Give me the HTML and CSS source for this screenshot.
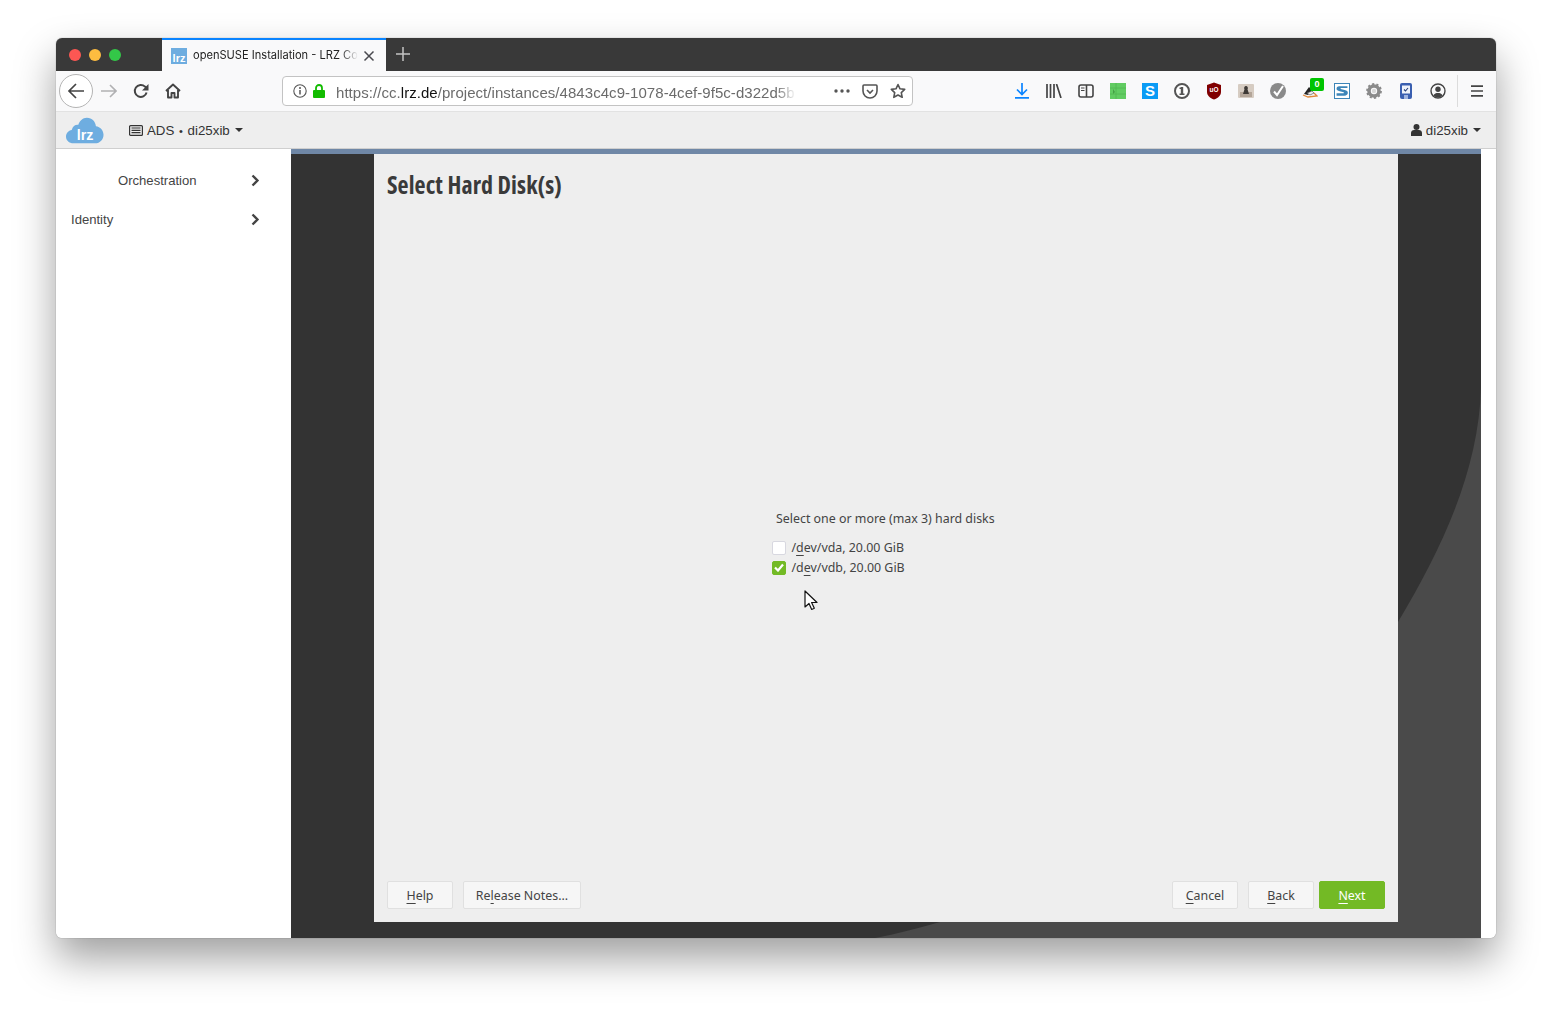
FILE: index.html
```html
<!DOCTYPE html>
<html lang="en">
<head>
<meta charset="utf-8">
<title>openSUSE Installation - LRZ Compute Cloud</title>
<link rel="stylesheet" href="styles.css">
</head>
<body>
<div class="window">
  <div class="tabbar">
    <div class="lights"><span class="light red"></span><span class="light yellow"></span><span class="light green"></span></div>
    <div class="tab">
      <span class="favicon">lrz</span>
      <span class="tab-title">openSUSE Installation - LRZ Co</span>
      <svg class="tab-close" width="12" height="12" viewBox="0 0 12 12"><path d="M1.5 1.5l9 9M10.5 1.5l-9 9" stroke="#4a4a4f" stroke-width="1.5"/></svg>
    </div>
    <svg class="new-tab" width="14" height="14" viewBox="0 0 14 14"><path d="M7 0v14M0 7h14" stroke="#c4c4c4" stroke-width="1.5"/></svg>
  </div>

  <div class="toolbar">
    <span class="back-btn"><svg width="18" height="16" viewBox="0 0 18 16"><path d="M9 1L2 8l7 7M2 8h15" fill="none" stroke="#444" stroke-width="1.7"/></svg></span>
    <span class="tool"><svg width="16" height="14" viewBox="0 0 16 14"><path d="M9 1l6 6-6 6M15 7H0" fill="none" stroke="#b1b1b3" stroke-width="1.6"/></svg></span>
    <span class="tool"><svg width="16" height="16" viewBox="0 0 16 16"><path d="M13.6 9.5A6 6 0 1 1 12 3.6L14 5.4" fill="none" stroke="#444" stroke-width="2"/><path d="M15.500 1v6.500H9z" fill="#444"/></svg></span>
    <span class="tool"><svg width="16" height="16" viewBox="0 0 16 16"><path d="M1 8l7-6.5L15 8M3 7v7.500h3.500V10h3v4.500H13V7" fill="none" stroke="#444" stroke-width="1.900" stroke-linejoin="round"/></svg></span>
    <div class="urlbar">
      <svg class="url-info" width="14" height="14" viewBox="0 0 14 14"><circle cx="7" cy="7" r="6.200" fill="none" stroke="#555" stroke-width="1.100"/><path d="M7 6v4.500" stroke="#555" stroke-width="1.500"/><circle cx="7" cy="4" r="1" fill="#555"/></svg>
      <svg class="url-lock" width="12" height="14" viewBox="0 0 12 14"><rect x="0" y="6" width="12" height="8" rx="1" fill="#12bc00"/><path d="M3 6.500V4a3 3 0 0 1 6 0v2.500" fill="none" stroke="#12bc00" stroke-width="1.800"/></svg>
      <span class="url-text">https://cc.<b>lrz.de</b>/project/instances/4843c4c9-1078-4cef-9f5c-d322d5b</span>
      <svg class="url-more" width="16" height="4" viewBox="0 0 16 4"><circle cx="2" cy="2" r="1.700" fill="#555"/><circle cx="8" cy="2" r="1.700" fill="#555"/><circle cx="14" cy="2" r="1.700" fill="#555"/></svg>
      <svg class="url-pocket" width="16" height="15" viewBox="0 0 16 15"><path d="M2 1h12a1 1 0 0 1 1 1v5a7 7 0 0 1-14 0V2a1 1 0 0 1 1-1z" fill="none" stroke="#555" stroke-width="1.600"/><path d="M5 6l3 3 3-3" fill="none" stroke="#555" stroke-width="1.600"/></svg>
      <svg class="url-star" width="16" height="16" viewBox="0 0 16 16"><path d="M8 1.500l2 4.300 4.700.6-3.400 3.200.9 4.700L8 12l-4.200 2.300.9-4.700L1.300 6.400 6 5.800z" fill="none" stroke="#555" stroke-width="1.600" stroke-linejoin="round"/></svg>
    </div>
    <div class="tool-group">
      <span class="tool"><svg width="14" height="16" viewBox="0 0 14 16"><path d="M7 0v11M2 6.500L7 11.500 12 6.500" fill="none" stroke="#0a84ff" stroke-width="1.700"/><path d="M0 14.800h14" stroke="#0a84ff" stroke-width="1.800"/></svg></span>
      <span class="tool"><svg width="16" height="14" viewBox="0 0 16 14"><path d="M1 0v14M4.500 0v14M8 0v14M10.500 0L15 14" fill="none" stroke="#444" stroke-width="1.700"/></svg></span>
      <span class="tool"><svg width="16" height="14" viewBox="0 0 16 14"><rect x="1" y="1" width="14" height="12" rx="2" fill="none" stroke="#444" stroke-width="1.600"/><path d="M8.500 1v12" stroke="#444" stroke-width="1.600"/><path d="M3 4h3.500M3 6.500h3.500" stroke="#444" stroke-width="1.100"/></svg></span>
      <span class="tool"><svg width="16" height="16" viewBox="0 0 16 16"><rect width="16" height="16" fill="#62cc62"/><path d="M6 0v16M0 5h16M0 11h16" stroke="#52b852" stroke-width=".8"/><path d="M3 6l2 3-2 2z" fill="#45a045"/></svg></span>
      <span class="tool"><span class="ext-s">S</span></span>
      <span class="tool"><svg width="16" height="16" viewBox="0 0 16 16"><circle cx="8" cy="8" r="7" fill="#fff" stroke="#555" stroke-width="2"/><path d="M6.800 4h2.400v8H6.800z" fill="#555"/><path d="M5.500 4.500h3v1.500h-3zM5.500 10.500h5V12h-5z" fill="#555"/></svg></span>
      <span class="tool"><svg width="16" height="18" viewBox="0 0 16 18"><path d="M8 .5L15 3v7c0 3.500-3 6-7 7.500C4 16 1 13.500 1 10V3z" fill="#800000"/><text class="ub" x="8" y="10" text-anchor="middle">uO</text></svg></span>
      <span class="tool"><svg width="16" height="16" viewBox="0 0 16 16"><rect width="16" height="14" y="1" rx="1" fill="#d6ccc2"/><rect x="2" y="9" width="12" height="5" fill="#b3a598"/><path d="M8 3a2 2 0 0 1 1.500 3.200L11 11H5l1.500-4.800A2 2 0 0 1 8 3z" fill="#3e3a36"/></svg></span>
      <span class="tool"><svg width="16" height="16" viewBox="0 0 16 16"><circle cx="8" cy="8" r="8" fill="#8a8a8a"/><path d="M4 8.500l3 3.500 6-9" fill="none" stroke="#fff" stroke-width="2"/></svg></span>
      <span class="tool"><svg width="16" height="14" viewBox="0 0 16 14"><path d="M1 11l5 2 9-1-3-3" fill="none" stroke="#e08a3c" stroke-width="1.300"/><path d="M2 10l5-7 3 3-4 5z" fill="#222"/><path d="M5 9l5-2 2 2-4 2z" fill="#eee" stroke="#444" stroke-width=".6"/></svg><span class="badge">0</span></span>
      <span class="tool"><span class="ext-s2"><svg width="18" height="16" viewBox="0 0 18 16"><path d="M16 2H5.500C3 2 2 3.500 2 5c0 2 1.500 2.500 4 3.200l4 1c1 .3 1.500.5 1.500 1s-.5.800-1.500.800H2v3h10c3 0 4.500-1.500 4.500-3.700 0-2-1.300-2.800-4-3.500l-4-1c-1-.3-1.500-.5-1.500-.9s.4-.7 1.300-.7H16z" fill="#3d85b8"/></svg></span></span>
      <span class="tool"><svg width="16" height="16" viewBox="0 0 16 16"><circle cx="8" cy="8" r="5" fill="none" stroke="#8a8a8a" stroke-width="3.600"/><circle cx="8" cy="8" r="7" fill="none" stroke="#8a8a8a" stroke-width="1.800" stroke-dasharray="2.200 2.200"/><circle cx="8" cy="8" r="2.200" fill="#d8d8d8"/></svg></span>
      <span class="tool"><svg width="12" height="16" viewBox="0 0 12 16"><rect width="12" height="16" rx="2" fill="#3a5fb0"/><rect x="2" y="2.500" width="8" height="8" fill="#eef2fa"/><path d="M4 6.500l1.500 1.500L8 5" fill="none" stroke="#27407a" stroke-width="1.100"/><rect x="4" y="12" width="4" height="4" fill="#9fb4e0"/></svg></span>
      <span class="tool"><svg width="16" height="16" viewBox="0 0 16 16"><circle cx="8" cy="8" r="7" fill="none" stroke="#444" stroke-width="1.400"/><circle cx="8" cy="6.300" r="2.700" fill="#444"/><path d="M3.300 12.500C4.500 10.500 6 10 8 10s3.500.5 4.700 2.500A7 7 0 0 1 8 14.500a7 7 0 0 1-4.700-2z" fill="#444"/></svg></span>
    </div>
    <span class="tool-sep"></span>
    <span class="tool"><svg width="12" height="12" viewBox="0 0 12 12"><path d="M0 1.200h12M0 6h12M0 10.800h12" stroke="#444" stroke-width="1.700"/></svg></span>
  </div>

  <header class="appbar">
    <svg class="logo" width="38" height="27" viewBox="0 0 40 28"><path d="M8 27.500C3 27.500 0 24 0 20.500s2.500-6.500 6-7C7 9.500 10 7.500 13 8c1-4 4.500-7.500 9-7.500 5.500 0 9 4 9.500 9 4.500 .5 8 4.500 8 9 0 5-3.500 9-9 9z" fill="#6eade0"/><text class="logo-text" x="20" y="24.500" text-anchor="middle">lrz</text></svg>
    <span class="project">
      <svg width="14" height="11" viewBox="0 0 14 11"><rect x=".6" y=".6" width="12.800" height="9.800" rx="1" fill="none" stroke="#333" stroke-width="1.200"/><path d="M2.500 3h9M2.500 5.300h9M2.500 7.700h9" stroke="#333" stroke-width="1.200"/></svg>
      <span>ADS <span class="dot">•</span> di25xib</span>
      <span class="caret"></span>
    </span>
    <span class="user">
      <svg width="11" height="12" viewBox="0 0 11 12"><circle cx="5.500" cy="3" r="3" fill="#333"/><path d="M0 12V9c0-2 1.500-3 3-3h5c1.500 0 3 1 3 3v3z" fill="#333"/></svg>
      <span>di25xib</span>
      <span class="caret"></span>
    </span>
  </header>

  <div class="content">
    <nav class="sidebar">
      <a class="side-item side-item-center"><span>Orchestration</span><svg width="9" height="13" viewBox="0 0 9 13"><path d="M1.500 1.500l5 5-5 5" fill="none" stroke="#444" stroke-width="2.300"/></svg></a>
      <a class="side-item"><span>Identity</span><svg width="9" height="13" viewBox="0 0 9 13"><path d="M1.500 1.500l5 5-5 5" fill="none" stroke="#444" stroke-width="2.300"/></svg></a>
    </nav>
    <main class="console">
      <svg class="console-bg" width="1190" height="789" viewBox="0 0 1190 789"><path d="M1190 238C1188 320 1152 398 1107 473L649 773C628 779 605 785 584 789H1190z" fill="#4a4a4a"/></svg>
      <div class="band"></div>
      <section class="dialog">
        <h1 class="dialog-title">Select Hard Disk(s)</h1>
        <div class="dialog-body">
          <div class="disk-group">
            <div class="disk-label">Select one or more (max 3) hard disks</div>
            <label class="disk"><span class="check"></span><span>/<u>d</u>ev/vda, 20.00 GiB</span></label>
            <label class="disk"><span class="check checked"><svg width="10" height="9" viewBox="0 0 10 9"><path d="M1 4.500l3 3 5-6" fill="none" stroke="#fff" stroke-width="2.200"/></svg></span><span>/d<u>e</u>v/vdb, 20.00 GiB</span></label>
          </div>
        </div>
        <div class="dialog-actions">
          <button class="btn"><u>H</u>elp</button>
          <button class="btn btn-wide">Re<u>l</u>ease Notes...</button>
          <span class="spacer"></span>
          <button class="btn"><u>C</u>ancel</button>
          <button class="btn"><u>B</u>ack</button>
          <button class="btn btn-next"><u>N</u>ext</button>
        </div>
        <svg class="cursor" width="14" height="21" viewBox="0 0 14 21"><path d="M1 1v16l4-3.500 2.700 6 2.600-1.200-2.700-5.800H13z" fill="#fff" stroke="#111" stroke-width="1.200" stroke-linejoin="round"/></svg>
      </section>
    </main>
    <div class="scroll-gutter"></div>
  </div>
</div>
</body>
</html>
```

FILE: styles.css
```css
* { box-sizing: border-box; }
html, body { margin: 0; height: 100%; }
body {
  background: #fff;
  padding: 38px 56px 74px;
  overflow: hidden;
  font-family: "Liberation Sans", Arial, sans-serif;
}
.window {
  width: 1440px;
  height: 900px;
  display: flex;
  flex-direction: column;
  border-radius: 6px;
  overflow: hidden;
  background: #fff;
  box-shadow: 0 0 1px rgba(0,0,0,.55), 0 20px 40px rgba(0,0,0,.38);
}

/* tab strip */
.tabbar { height: 33px; flex: none; display: flex; align-items: center; background: #393939; }
.lights { width: 106px; display: flex; gap: 8px; padding-left: 13px; flex: none; }
.light { width: 12px; height: 12px; border-radius: 50%; }
.red { background: #fc5753; }
.yellow { background: #fdbc40; }
.green { background: #33c748; }
.tab {
  width: 224px; height: 33px; flex: none;
  display: flex; align-items: center;
  padding: 0 0 0 9px;
  background: #f9f9fa;
  border-top: 2px solid #0a84ff;
}
.favicon {
  width: 16px; height: 16px; flex: none;
  background: #6eade0; color: #fff;
  font: bold 11px/21px "Liberation Sans", sans-serif;
  text-align: center; overflow: hidden;
}
.tab-title {
  width: 165px; margin: 0 0 1px 6px; flex: none;
  font: 11.1px/16px "Inter", sans-serif;
  color: #222;
  white-space: nowrap;
  -webkit-mask-image: linear-gradient(90deg, #000 148px, transparent 165px);
  mask-image: linear-gradient(90deg, #000 148px, transparent 165px);
}
.tab-close { margin-left: 5px; flex: none; }
.new-tab { margin: 0 0 2px 10px; }

/* nav toolbar */
.toolbar {
  height: 41px; flex: none;
  display: flex; align-items: center;
  padding-left: 3px;
  background: #f9f9fa;
  border-bottom: 1px solid #e2e2e2;
}
.back-btn {
  width: 34px; height: 34px; flex: none;
  display: flex; align-items: center; justify-content: center;
  border: 1px solid #b4b4b4; border-radius: 50%;
  background: #fff;
}
.tool { width: 32px; height: 32px; flex: none; display: flex; align-items: center; justify-content: center; position: relative; }
.urlbar {
  width: 631px; height: 30px; flex: none;
  margin-left: 93px;
  display: flex; align-items: center;
  padding: 0 6px 0 10px;
  background: #fff;
  border: 1px solid #c3c3c3; border-radius: 4px;
}
.url-info { flex: none; }
.url-lock { flex: none; margin-left: 6px; }
.url-text {
  width: 460px; margin: 3px 0 0 11px; flex: none;
  font-size: 15px; line-height: 18px; letter-spacing: .05px; color: #6b6b6b;
  white-space: nowrap;
  -webkit-mask-image: linear-gradient(90deg, #000 440px, transparent 460px);
  mask-image: linear-gradient(90deg, #000 440px, transparent 460px);
}
.url-text b { font-weight: normal; color: #111; }
.url-more { margin-left: 38px; flex: none; }
.url-pocket { margin-left: 12px; flex: none; }
.url-star { margin-left: 12px; flex: none; }
.tool-group { display: flex; margin-left: 93px; flex: none; }
.tool-sep { width: 1px; height: 32px; background: #dcdcdc; margin: 0 3px; flex: none; }
.ext-s {
  width: 16px; height: 16px; display: block;
  background: #0a9bf5; color: #fff;
  font: bold 15px/16px "Liberation Sans", sans-serif; text-align: center;
}
.ext-s2 { width: 16px; height: 16px; display: flex; align-items: center; justify-content: center; border: 1px solid #3d85b8; background: #fff; overflow: hidden; }
.ub { font: bold 6.500px "Liberation Sans", sans-serif; fill: #fff; }
.badge {
  position: absolute; left: 16px; top: 3px;
  width: 14px; height: 13px; border-radius: 2px;
  background: #00c400; color: #fff;
  font: bold 9px/13px "Liberation Sans", sans-serif; text-align: center;
}

/* app bar */
.appbar {
  height: 37px; flex: none;
  display: flex; align-items: center;
  padding: 0 15px 0 10px;
  background: #eee;
  border-bottom: 1px solid #cfcfcf;
  font-size: 13.300px; color: #333;
}
.logo { flex: none; }
.logo-text { font: bold 15px "Liberation Sans", sans-serif; fill: #fff; }
.project { margin-left: 25px; display: flex; align-items: center; gap: 4px; }
.project .dot { font-size: 11px; margin: 0 1px; }
.user { margin-left: auto; display: flex; align-items: center; gap: 4px; }
.caret { display: inline-block; width: 0; height: 0; border: 4px solid transparent; border-top-color: #333; border-bottom-width: 0; margin-left: 1px; }

/* main area */
.content { flex: 1; display: flex; min-height: 0; }
.sidebar { width: 235px; flex: none; background: #fff; padding-top: 12px; font-size: 13.100px; color: #444; }
.side-item { height: 39px; display: flex; align-items: center; justify-content: space-between; padding: 0 31px 0 15px; }
.side-item-center { padding-left: 62px; }
.console { width: 1190px; flex: none; position: relative; background: #333; display: flex; flex-direction: column; overflow: hidden; }
.console-bg { position: absolute; left: 0; top: 0; }
.band { height: 5px; flex: none; background: #6f87a6; position: relative; }
.dialog {
  position: relative;
  width: 1024px; height: 768px; flex: none;
  margin-left: 83px;
  display: flex; flex-direction: column;
  padding: 0 13px 13px;
  background: #eee;
  font-family: "Noto Sans", "Open Sans", sans-serif;
  font-size: 12.400px; color: #444;
}
.dialog-title {
  margin: 17px 0 0; height: 34px;
  font-family: "Open Sans", "Noto Sans", sans-serif;
  font-stretch: 75%;
  font-size: 24px; line-height: 28px; letter-spacing: .1px; font-weight: 700; color: #3a3a3a;
}
.dialog-body { flex: 1; display: flex; align-items: center; justify-content: center; }
.disk-group { width: 222px; margin-left: -7px; }
.disk-label { padding-left: 4.500px; height: 20px; line-height: 19px; margin-bottom: 9px; white-space: nowrap; }
.disk { display: flex; align-items: center; height: 20px; gap: 6px; white-space: nowrap; }
.check { width: 14px; height: 14px; flex: none; display: flex; align-items: center; justify-content: center; background: #fff; border: 1px solid #d8d8e0; border-radius: 2px; }
.checked { background: #73ba25; border-color: #73ba25; }
.dialog-actions { display: flex; gap: 10px; height: 28px; flex: none; }
.spacer { flex: 1; }
.btn {
  width: 66px; height: 28px; padding: 1px 0 0;
  background: #f6f6f6;
  border: 1px solid #e0e0e0; border-radius: 2px;
  font: inherit; color: #444;
}
.btn-wide { width: 118px; }
.btn-next { background: #73ba25; border-color: #73ba25; color: #fff; margin-left: -5px; }
u { text-underline-offset: 2.500px; text-decoration-thickness: 1px; }
.cursor { position: absolute; left: 430px; top: 436px; }
.scroll-gutter { flex: 1; background: #fff; }
```
